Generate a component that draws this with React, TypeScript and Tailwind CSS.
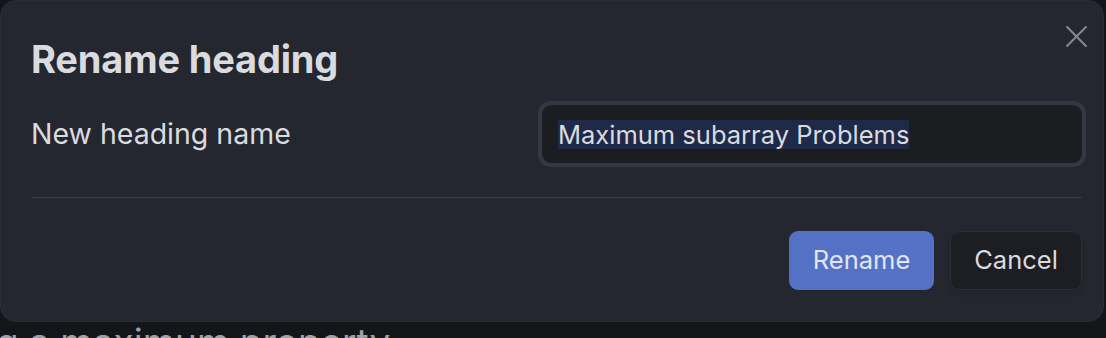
import React from "react";

export default function App() {
  return (
    <div
      className="w-[1106px] h-[338px] overflow-hidden bg-[#141519] flex flex-col"
      style={{ fontFamily: "Inter, 'Noto Sans', sans-serif" }}
    >
      <div className="w-[1104px] h-[322px] shrink-0 rounded-2xl bg-[#242730] border border-[#2a2d35] flex flex-col pl-[30px] pr-[21px] relative">
        <button className="absolute right-[14px] top-[22px] w-[26px] h-[26px] flex items-center justify-center text-[#85878c]">
          <svg width="23" height="23" viewBox="0 0 22 22" fill="none" stroke="currentColor" strokeWidth="2" strokeLinecap="round">
            <path d="M2 2 L20 20 M20 2 L2 20" />
          </svg>
        </button>
        <div className="pt-[34px] text-[38px] font-bold text-[#dadbdf] leading-[48px] tracking-[-0.2px]">Rename heading</div>
        <div className="flex items-center justify-between mt-[18px] h-[66px]">
          <div className="text-[28.5px] text-[#dadbdf]">New heading name</div>
          <div className="w-[540px] h-[58px] rounded-[9px] bg-[#1c1d21] shadow-[0_0_0_4px_#343843] flex items-center px-[16px]">
            <span className="text-[25.5px] text-[#dadbdf] bg-[#1f2a48] leading-[29px]">Maximum subarray Problems</span>
          </div>
        </div>
        <div className="mt-[30px] h-px bg-[#3a3d46]" />
        <div className="flex justify-end gap-[16px] mt-[33px]">
          <button className="w-[145px] h-[59px] rounded-[9px] bg-[#5571c6] text-[25.5px] text-[#e2e6f2]">Rename</button>
          <button className="w-[132px] h-[59px] rounded-[9px] bg-[#1d1e23] border border-[#2d2f36] shadow-md text-[25.5px] text-[#dadbdf]">Cancel</button>
        </div>
      </div>
      <div className="-ml-[4px] -mt-[2px] text-[37px] leading-[44px] text-[#a0a1a5] whitespace-nowrap">g a maximum property</div>
    </div>
  );
}
